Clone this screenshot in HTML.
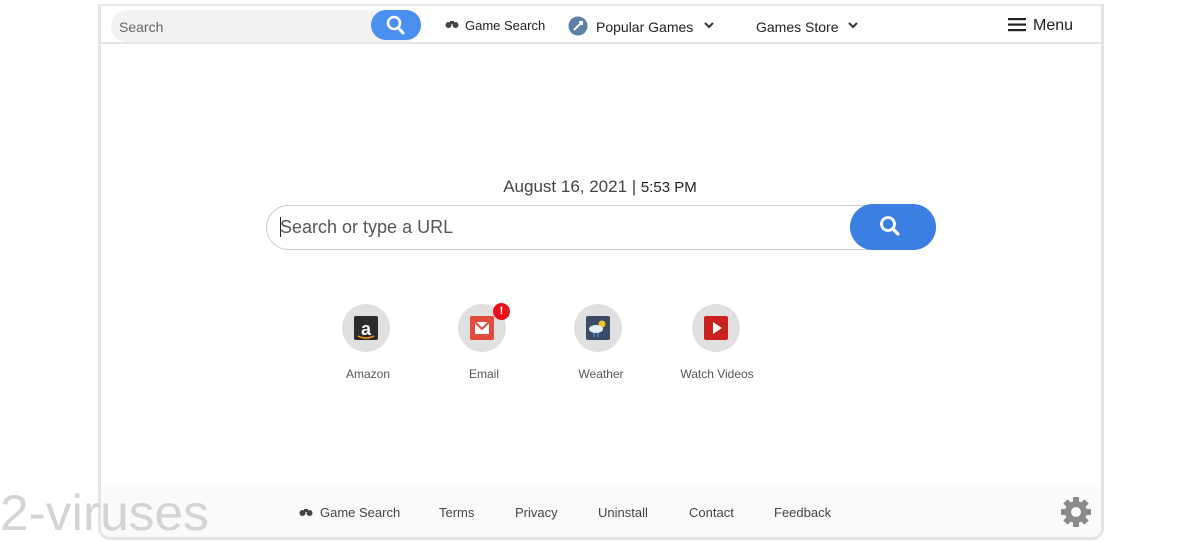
<!DOCTYPE html>
<html><head><meta charset="utf-8"><style>
*{margin:0;padding:0;box-sizing:border-box}
body{width:1200px;height:542px;background:#fff;font-family:"Liberation Sans",sans-serif;position:relative;overflow:hidden;color:#333}
.frame{position:absolute;left:98px;top:4px;width:1006px;height:536px;border:3px solid #e4e4e4;border-top:2px solid #e8e8e8;border-radius:0 0 12px 12px;background:#fff}
.hdr{position:absolute;left:0;top:0;right:0;height:38px;border-bottom:2px solid #e4e4e4}
.ts{position:absolute;left:10px;top:4px;width:310px;height:32px;background:#f1f2f4;border-radius:16px}
.ts span{position:absolute;left:8px;top:9px;font-size:14px;color:#666}
.tb{position:absolute;left:270px;top:4px;width:50px;height:30px;background:#4a8ff0;border-radius:15px}
.nav{position:absolute;top:12px;font-size:14px;color:#222}
.main{position:absolute;left:266px;top:205px;width:670px;height:45px;border:1.5px solid #ccc;border-radius:23px}
.main span{position:absolute;left:13px;top:11px;font-size:18px;color:#555}
.mb{position:absolute;left:850px;top:204px;width:86px;height:46px;background:#3b7fe3;border-radius:23px}
.tile{position:absolute;top:304px;width:48px;height:48px;border-radius:50%;background:#e0e0e0}
.lbl{position:absolute;top:367px;font-size:12px;color:#555;text-align:center;width:120px}
.foot{position:absolute;left:0;right:0;bottom:0;height:50px;background:#fbfafb;border-radius:0 0 10px 10px}
.fl{position:absolute;top:505px;font-size:13px;color:#444}
</style></head><body>
<div class="frame">
<div class="hdr">
<div class="ts"><span>Search</span></div>
<div class="tb"><svg width="50" height="30"><circle cx="23" cy="13" r="6" fill="none" stroke="#fff" stroke-width="2.6"/><line x1="27" y1="17.5" x2="32" y2="23" stroke="#fff" stroke-width="3" stroke-linecap="round"/></svg></div>
</div>
<div class="foot"></div>
</div>
<svg style="position:absolute;left:445px;top:20px" width="14" height="9"><circle cx="3.5" cy="5" r="3" fill="#444"/><circle cx="10.5" cy="5" r="3" fill="#444"/><rect x="5" y="1" width="4" height="3" fill="#444"/></svg>
<div class="nav" style="left:465px;top:18px;font-size:13px">Game Search</div>
<svg style="position:absolute;left:568px;top:16px" width="20" height="20"><circle cx="10" cy="10" r="9.5" fill="#5b7fa6"/><path d="M6 14 L13 7 M11 6 l3 0 0 3" stroke="#fff" stroke-width="2" fill="none"/></svg>
<div class="nav" style="left:596px;top:19px">Popular Games</div>
<svg style="position:absolute;left:703px;top:20px" width="12" height="10"><path d="M2 3 L6 7 L10 3" stroke="#333" stroke-width="2" fill="none"/></svg>
<div class="nav" style="left:756px;top:19px">Games Store</div>
<svg style="position:absolute;left:847px;top:20px" width="12" height="10"><path d="M2 3 L6 7 L10 3" stroke="#333" stroke-width="2" fill="none"/></svg>
<svg style="position:absolute;left:1008px;top:18px" width="18" height="14"><rect y="0" width="18" height="2.2" fill="#222"/><rect y="5.5" width="18" height="2.2" fill="#222"/><rect y="11" width="18" height="2.2" fill="#222"/></svg>
<div class="nav" style="left:1033px;top:17px;font-size:16px">Menu</div>

<div style="position:absolute;left:0;width:1200px;top:177px;text-align:center;font-size:17px;color:#444">August 16, 2021 | <span style="font-size:15px;color:#222">5:53 PM</span></div>
<div class="main"><span>Search or type a URL</span></div>
<div style="position:absolute;left:280px;top:217px;width:1px;height:20px;background:#222"></div>
<div class="mb"><svg width="86" height="46"><circle cx="38" cy="20" r="6.5" fill="none" stroke="#fff" stroke-width="2.8"/><line x1="43" y1="25" x2="48" y2="30" stroke="#fff" stroke-width="3.2" stroke-linecap="round"/></svg></div>

<div class="tile" style="left:342px"><svg width="48" height="48"><rect x="12" y="12" width="24" height="24" rx="2" fill="#2b2b2b"/><text x="24" y="31" text-anchor="middle" fill="#fff" font-size="18" font-weight="bold" font-family="Liberation Sans">a</text><path d="M16 32 q8 4 16 0" stroke="#f90" stroke-width="1.5" fill="none"/></svg></div>
<div class="tile" style="left:458px"><svg width="48" height="48"><rect x="12" y="12" width="24" height="24" rx="2" fill="#e34b3f"/><path d="M17 18 h14 v12 h-14 z" fill="#fff"/><path d="M17 18 l7 7 l7 -7" stroke="#e34b3f" stroke-width="2" fill="none"/></svg></div>
<div style="position:absolute;left:493px;top:303px;width:17px;height:17px;border-radius:50%;background:#e8141c;color:#fff;font-size:11px;font-weight:bold;text-align:center;line-height:17px">!</div>
<div class="tile" style="left:574px"><svg width="48" height="48"><rect x="12" y="12" width="24" height="24" rx="2" fill="#3b4a66"/><circle cx="28" cy="20" r="3.5" fill="#f5c518"/><ellipse cx="22" cy="25" rx="7" ry="4" fill="#e8eef5"/><path d="M20 29 v4 M24 29 v4" stroke="#4af" stroke-width="1"/></svg></div>
<div class="tile" style="left:692px"><svg width="48" height="48"><rect x="12" y="12" width="24" height="24" rx="2" fill="#c9211e"/><path d="M21 18 L30 24 L21 30 Z" fill="#fff"/></svg></div>
<div class="lbl" style="left:308px">Amazon</div>
<div class="lbl" style="left:424px">Email</div>
<div class="lbl" style="left:541px">Weather</div>
<div class="lbl" style="left:657px">Watch Videos</div>

<svg style="position:absolute;left:299px;top:508px" width="14" height="9"><circle cx="3.5" cy="5" r="3" fill="#444"/><circle cx="10.5" cy="5" r="3" fill="#444"/><rect x="5" y="1" width="4" height="3" fill="#444"/></svg>
<div class="fl" style="left:320px">Game Search</div>
<div class="fl" style="left:439px">Terms</div>
<div class="fl" style="left:515px">Privacy</div>
<div class="fl" style="left:598px">Uninstall</div>
<div class="fl" style="left:689px">Contact</div>
<div class="fl" style="left:774px">Feedback</div>
<svg style="position:absolute;left:1060px;top:496px" width="32" height="32" viewBox="0 0 32 32"><g fill="#8a8a8a"><circle cx="16" cy="16" r="11"/><g stroke="#8a8a8a" stroke-width="6"><line x1="16" y1="1" x2="16" y2="31"/><line x1="1" y1="16" x2="31" y2="16"/><line x1="5.4" y1="5.4" x2="26.6" y2="26.6"/><line x1="26.6" y1="5.4" x2="5.4" y2="26.6"/></g></g><circle cx="16" cy="16" r="5" fill="#fbfafb"/></svg>
<div style="position:absolute;left:0;top:484px;font-size:50px;color:#d4d4d4;line-height:58px;transform:scaleX(1.03);transform-origin:left">2-viruses</div>
</body></html>
